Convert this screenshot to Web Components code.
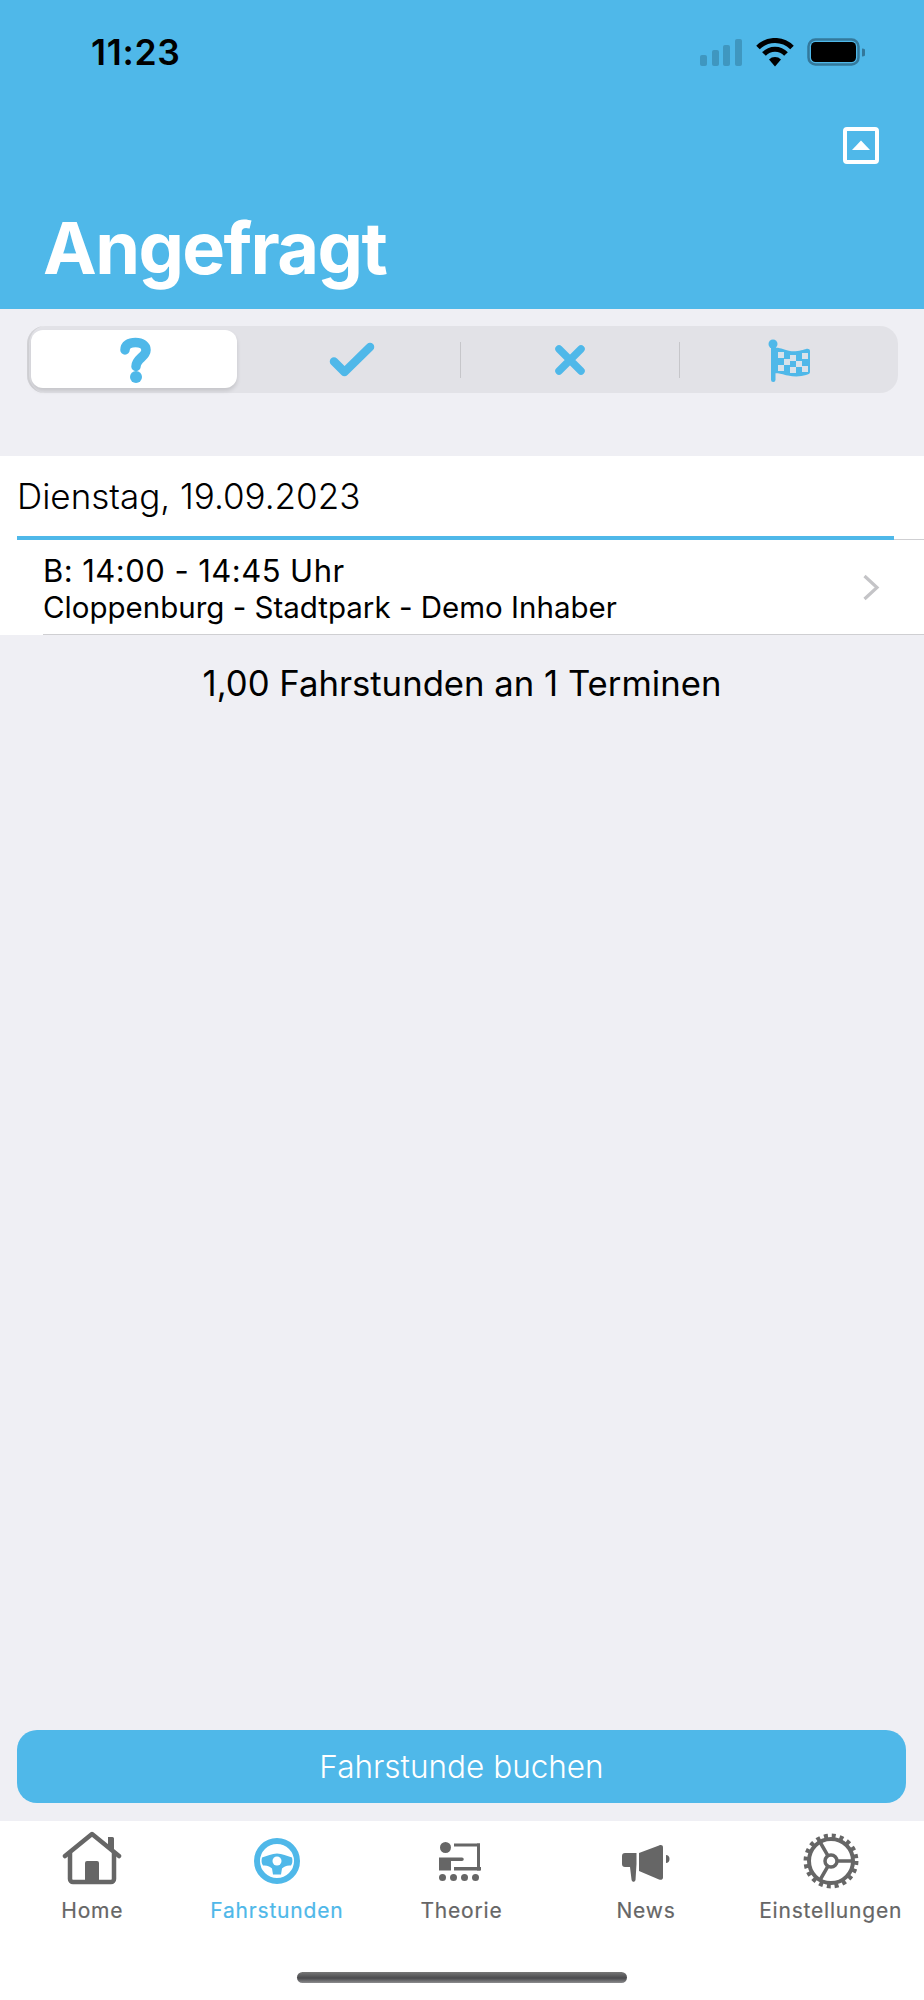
<!DOCTYPE html>
<html lang="de"><head><meta charset="utf-8"><title>Angefragt</title>
<style>
html,body{margin:0;padding:0;background:#EFEFF4}
body{font-family:Inter,"Liberation Sans",sans-serif;width:924px;height:2000px;overflow:hidden;font-feature-settings:"calt" 0}
app-screen{height:2000px}
</style></head><body>
<app-screen>
  <app-header slot="top" title-text="Angefragt" time="11:23"></app-header>
  <seg-control></seg-control>
  <day-section date="Dienstag, 19.09.2023">
    <lesson-row line1="B: 14:00 - 14:45 Uhr" line2="Cloppenburg - Stadtpark - Demo Inhaber"></lesson-row>
  </day-section>
  <summary-line>1,00 Fahrstunden an 1 Terminen</summary-line>
  <book-button>Fahrstunde buchen</book-button>
  <tab-bar></tab-bar>
</app-screen>
<script>
const def=(name,html)=>customElements.define(name,class extends HTMLElement{
  constructor(){super();this.attachShadow({mode:'open'})}
  connectedCallback(){this.shadowRoot.innerHTML=html.replace(/\{\{(\w+)\}\}/g,(m,a)=>this.getAttribute(a.replace(/_/g,'-'))||'');}
});
const BLUE='#4FB8E9';
def('app-screen',`<style>:host{display:flex;flex-direction:column;width:924px;background:#EFEFF4}</style><slot name="top"></slot><slot></slot>`);
def('app-header',`<style>:host{display:block;height:309px;background:${BLUE};box-sizing:border-box;overflow:hidden}
.status{display:flex;justify-content:space-between;align-items:center;height:38px;padding:34px 59px 0 91px}
.time{font:600 35.500px/38px Inter,sans-serif;color:#000;letter-spacing:.7px}
.tools{display:flex;justify-content:flex-end;padding:55px 45px 0 0;height:37px}
h1{margin:0;padding:40px 0 0 43px;font:700 72px/88px Inter,sans-serif;color:#fff;letter-spacing:-1.6px}
svg{display:block}</style>
<div class="status"><div class="time">{{time}}</div>
<svg width="165" height="30" viewBox="0 0 165 30"><g fill="#3F97C0"><rect x="0" y="17" width="7" height="11" rx="2"/><rect x="12" y="12" width="7" height="16" rx="2"/><rect x="23" y="7" width="7" height="21" rx="2"/><rect x="35" y="1" width="7" height="27" rx="2"/></g>
<g fill="none" stroke="#000" stroke-width="5"><path d="M58 9.5a24 24 0 0 1 34 0"/><path d="M64 16a15 15 0 0 1 22 0"/></g><path d="M69 21.5a8.5 8.5 0 0 1 12 0L75 28.5z" fill="#000"/>
<rect x="108.500" y="1.500" width="50" height="25" rx="7" fill="none" stroke="#33789B" stroke-width="2.500"/><rect x="111" y="4" width="45" height="20" rx="4.500" fill="#000"/><path d="M162 10.500a4 4 0 0 1 0 8z" fill="#33789B"/></svg></div>
<div class="tools"><svg width="36" height="37" viewBox="0 0 36 37"><rect x="2" y="2" width="32" height="33" rx="2" fill="none" stroke="#fff" stroke-width="4"/><path d="M9 23L18 13.500 27 23z" fill="#fff"/></svg></div>
<h1>{{title_text}}</h1>`);
def('seg-control',`<style>:host{display:block;margin:17px 26px 0 27px;height:67px;background:#E2E2E7;border-radius:18px;position:relative;box-shadow:inset 3px 0 0 -1px #D2D2D6}
.row{display:grid;grid-template-columns:repeat(4,1fr);height:100%}
.c{display:flex;align-items:center;justify-content:center;position:relative}
.c+.c+.c::before{content:"";position:absolute;left:-2px;top:16px;height:36px;width:1px;background:#C6C6CA}
.sel{position:absolute;left:4px;top:4px;width:206px;height:58px;background:#fff;border-radius:12px;box-shadow:0 3px 4px rgba(0,0,0,.13)}
svg{display:block;position:relative}</style>
<div class="sel"></div>
<div class="row">
<div class="c"><svg width="34" height="46" viewBox="0 0 34 46"><path d="M6 13C6 8 10 5.500 16.500 5.500 23 5.500 27 8.500 27 13c0 7-10 8.500-10 16.500" fill="none" stroke="${BLUE}" stroke-width="9.500" stroke-linecap="round"/><circle cx="17" cy="40" r="6" fill="${BLUE}"/></svg></div>
<div class="c" style="left:-2px"><svg width="46" height="36" viewBox="0 0 46 36"><path d="M5 19.500L15.500 30 41 5" fill="none" stroke="${BLUE}" stroke-width="8.500" stroke-linecap="round" stroke-linejoin="round"/></svg></div>
<div class="c" style="left:-1px"><svg width="32" height="32" viewBox="0 0 32 32"><path d="M5 5L27 27M27 5L5 27" fill="none" stroke="${BLUE}" stroke-width="7.500" stroke-linecap="round"/></svg></div>
<div class="c" style="left:1px"><svg width="44" height="46" viewBox="0 0 44 46"><g fill="${BLUE}"><rect x="3" y="4" width="4.500" height="41" rx="2.200"/><circle cx="5" cy="7" r="4.500"/><path d="M5 11c8-1 10 2 17 3 7 1 14-1.500 16-2 2-.5 4 0 4 2v21c0 2-2 2.500-4 3-5 1.500-11 2-18 .5-7-1.500-9-3-15-2z"/></g>
<g fill="#D9E2EA"><rect x="10" y="15" width="6" height="6"/><rect x="22" y="18" width="6" height="6"/><rect x="34" y="16" width="6" height="6"/><rect x="16" y="22" width="6" height="6"/><rect x="28" y="24" width="6" height="6"/><rect x="10" y="28" width="6" height="6"/><rect x="22" y="30" width="6" height="6"/><rect x="34" y="29" width="6" height="6"/></g></svg></div>
</div>`);
def('day-section',`<style>:host{display:block;margin-top:63px;background:#fff}
.d{height:80px;box-sizing:border-box;padding:16px 0 0 17px;font:300 35px/48px Inter,sans-serif;color:#000}
.b{height:4px;margin:0 30px 0 17px;background:${BLUE}}</style>
<div class="d">{{date}}</div><div class="b"></div><slot></slot>`);
def('lesson-row',`<style>:host{display:flex;align-items:center;height:95px;box-sizing:border-box;margin-left:43px;border-bottom:1.500px solid #CFCFD2;position:relative;padding:3px 0 0 0}
:host::before{content:"";position:absolute;left:0;right:0;top:-1px;height:1px;margin-left:851px;background:#CFCFD2}
.t{flex:1;font-family:Inter,sans-serif;color:#000;font-weight:400}
.a{font-size:31px;line-height:37px;letter-spacing:.45px}
.l2{font-size:29.500px;line-height:37px}
svg{position:absolute;right:44px;top:34px}</style>
<div class="t"><div class="a">{{line1}}</div><div class="l2">{{line2}}</div></div>
<svg width="18" height="27" viewBox="0 0 18 27"><path d="M2.500 2L15 13.500 2.500 25" fill="none" stroke="#C4C4C7" stroke-width="3.200"/></svg>`);
def('summary-line',`<style>:host{display:block;flex:1;text-align:center;padding-top:27px;box-sizing:border-box;font:400 34.700px/42px Inter,sans-serif;color:#000}</style><slot></slot>`);
def('book-button',`<style>:host{display:flex;align-items:center;justify-content:center;height:73px;margin:0 18px 0 17px;background:${BLUE};border-radius:20px;color:#fff;font:300 31.500px/40px Inter,sans-serif}</style><slot></slot>`);
def('tab-item',`<style>:host{display:flex;flex-direction:column;align-items:center;flex:1;color:#666;font:400 21px/26px Inter,sans-serif;letter-spacing:.8px;white-space:nowrap;-webkit-text-stroke:.2px currentColor}
:host([active]){color:${BLUE}}
.i{height:64px;display:flex;align-items:flex-end}
.l{margin-top:13px}</style><div class="i"><slot></slot></div><div class="l">{{label}}</div>`);
def('tab-bar',`<style>:host{display:block;margin-top:18px;background:#fff;height:179px;position:relative}
.r{display:flex;padding:0;width:923px}
.bar{position:absolute;left:297px;top:151px;width:330px;height:11px;border-radius:6px;background:linear-gradient(#777,#4a4a4d 55%,#8c8c8e)}
svg{display:block}</style>
<div class="r">
<tab-item label="Home"><svg width="60" height="54" viewBox="0 0 60 54"><g fill="none" stroke="#666" stroke-width="4.500" stroke-linecap="round" stroke-linejoin="round"><path d="M3 25L30 3l27 22"/><path d="M8 22v26a3 3 0 0 0 3 3h38a3 3 0 0 0 3-3V22"/></g><path d="M46 6h4.500a1.500 1.500 0 0 1 1.500 1.500V21l-6-5zM23 32a2 2 0 0 1 2-2h10a2 2 0 0 1 2 2v19H23z" fill="#666"/></svg></tab-item>
<tab-item label="Fahrstunden" active><svg width="46" height="46" viewBox="0 0 46 46" style="margin-bottom:1px"><circle cx="23" cy="23" r="20" fill="none" stroke="${BLUE}" stroke-width="6"/><path d="M8 19.500c5-1.500 10-4 15-4s10 2.500 15 4c.8 3 .5 6-1 8-4-.5-7.500 1-9 3l-1 6h-8l-1-6c-1.500-2-5-3.500-9-3-1.500-2-1.800-5-1-8z" fill="${BLUE}"/><circle cx="23" cy="23" r="4.500" fill="#fff"/></svg></tab-item>
<tab-item label="Theorie"><svg width="44" height="42" viewBox="0 0 44 42" style="margin-bottom:2px"><g fill="#666"><circle cx="6.500" cy="6.500" r="5.500"/><rect x="15" y="2.500" width="26" height="3"/><rect x="38" y="2.500" width="3" height="27"/><rect x="15" y="26" width="27" height="3.500"/><path d="M0 16.500h23a1.500 1.500 0 0 1 0 3.500H12v9.500H0z"/><circle cx="3.500" cy="36.500" r="3.500"/><circle cx="14.500" cy="36.500" r="3.500"/><circle cx="25.500" cy="36.500" r="3.500"/><circle cx="36.500" cy="36.500" r="3.500"/></g></svg></tab-item>
<tab-item label="News"><svg width="48" height="38" viewBox="0 0 48 38" style="margin-bottom:3px"><g fill="#666"><path d="M3 9h11.500v11l-1 16a2 2 0 0 1-2.800 1.500c-.7-.4-1-1-1.200-2L8 23H3a3 3 0 0 1-3-3V12a3 3 0 0 1 3-3z"/><path d="M17 9L37 1.500c2-.8 4-.5 4 2v30c0 2-2 2.800-4 2L17 27z"/><path d="M44 11c2 0 3.500 1.500 3.500 4s-1.500 4-3.500 4z"/></g></svg></tab-item>
<tab-item label="Einstellungen"><svg width="56" height="56" viewBox="0 0 56 56" style="margin-bottom:-4px"><g fill="none" stroke="#666"><circle cx="28" cy="28" r="22" stroke-width="4"/><circle cx="28" cy="28" r="25.200" stroke-width="4.500" stroke-dasharray="4 3.917"/><circle cx="28" cy="28" r="6" stroke-width="3.500"/><path d="M34 28H50M25 22.800L17 9M25 33.200L17 47" stroke-width="3.500"/></g></svg></tab-item>
</div><div class="bar"></div>`);
</script>
</body></html>
